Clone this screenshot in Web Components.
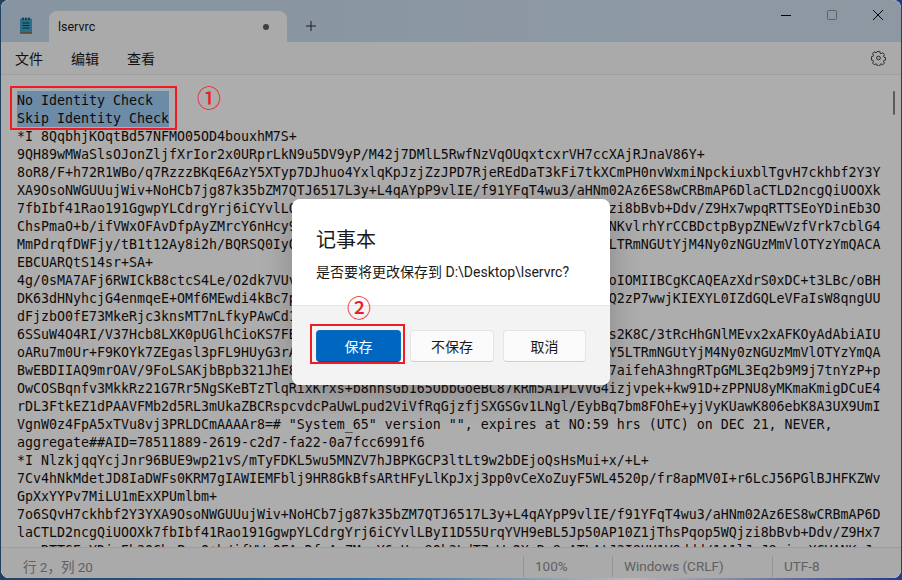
<!DOCTYPE html>
<html lang="zh">
<head>
<meta charset="utf-8">
<title>lservrc - 记事本</title>
<style>
  html, body { margin: 0; height: 100%; }
  body {
    width: 902px; height: 580px; overflow: hidden;
    background: linear-gradient(90deg, #23405f 0%, #2a6fa8 40%, #b9b9b9 70%, #24398c 100%);
    font-family: "Roboto", "Noto Sans CJK SC", sans-serif;
  }
</style>
</head>
<body>
<notepad-window>
  <notepad-titlebar slot="top" name="lservrc"></notepad-titlebar>
  <notepad-menubar slot="top">
    <span>文件</span><span>编辑</span><span>查看</span>
  </notepad-menubar>
  <notepad-editor></notepad-editor>
  <notepad-statusbar slot="bottom"></notepad-statusbar>
  <notepad-dialog slot="overlay" heading="记事本">
    是否要将更改保存到 D:\Desktop\lservrc?
    <dialog-button slot="actions" primary>保存</dialog-button>
    <dialog-button slot="actions">不保存</dialog-button>
    <dialog-button slot="actions">取消</dialog-button>
  </notepad-dialog>
  <red-mark slot="overlay" style="left:9px;top:86px;width:167px;height:44px"></red-mark>
  <red-mark slot="overlay" style="left:309px;top:324px;width:95px;height:40px"></red-mark>
  <red-number slot="overlay" style="left:196px;top:81px">①</red-number>
  <red-number slot="overlay" style="left:346px;top:291px">②</red-number>
</notepad-window>

<script>
// Window shell: everything under the overlay gets dimmed by the scrim
class NotepadWindow extends HTMLElement {
    constructor() {
        super();
        this.attachShadow({ mode: 'open' });
        this.shadowRoot.innerHTML = `
            <style>
                :host {
                    display: flex;
                    flex-direction: column;
                    position: relative;
                    width: 900px;
                    height: 578px;
                    margin-left: 1px;
                    border-radius: 8px;
                    overflow: hidden;
                    background: #fff;
                    color: #1a1a1a;
                }
                .main { flex: 1; min-height: 0; display: flex; }
                .scrim {
                    position: absolute;
                    inset: 0;
                    background: rgba(0, 0, 0, 0.32);
                }
            </style>
            <slot name="top"></slot>
            <div class="main"><slot></slot></div>
            <slot name="bottom"></slot>
            <div class="scrim"></div>
            <slot name="overlay"></slot>
        `;
    }
}

class NotepadTitlebar extends HTMLElement {
    constructor() {
        super();
        this.attachShadow({ mode: 'open' });
    }

    connectedCallback() {
        const name = this.getAttribute('name') || '';
        this.shadowRoot.innerHTML = `
            <style>
                :host {
                    display: flex;
                    align-items: flex-end;
                    height: 42px;
                    flex: none;
                    padding-left: 48px;
                    background: linear-gradient(90deg, #c6dcee, #cfe0f0 60%, #d2e1ef);
                    position: relative;
                }
                .logo { position: absolute; left: 17px; top: 17px; }
                .tab {
                    box-sizing: border-box;
                    width: 238px;
                    height: 31px;
                    border-radius: 8px 8px 0 0;
                    background: #fbfbfb;
                    display: flex;
                    align-items: center;
                    padding: 0 18px 0 9px;
                    font-size: 12.5px;
                }
                .tab span { flex: 1; }
                .dot { width: 6px; height: 6px; border-radius: 50%; background: #5c5c5c; }
                .plus { margin: 0 0 11px 19px; display: block; }
                .controls {
                    position: absolute;
                    right: 0;
                    top: 0;
                    display: flex;
                }
                .controls svg { display: block; width: 46px; height: 30px; }
            </style>
            <svg class="logo" width="16" height="17" viewBox="0 0 16 17">
                <rect x="2" y="1.500" width="12" height="14.500" rx="1" fill="#3fa6cb"/>
                <path d="M2 16h12" stroke="#9a5f2e" stroke-width="1.400"/>
                <path d="M4.500 6h7M4.500 8.500h7M4.500 11h7" stroke="#123f56" stroke-width="1.100"/>
                <path d="M5 .5v2.500M8 .5v2.500M11 .5v2.500" stroke="#123f56" stroke-width="1.400"/>
            </svg>
            <div class="tab"><span>${name}</span><i class="dot"></i></div>
            <svg class="plus" width="10" height="10" viewBox="0 0 10 10">
                <path d="M5 0v10M0 5h10" stroke="#2b2b2b" stroke-width="1"/>
            </svg>
            <div class="controls">
                <svg viewBox="0 0 46 30"><path d="M18 15.500h10" stroke="#000" stroke-width="1"/></svg>
                <svg viewBox="0 0 46 30"><rect x="18.500" y="10.500" width="9" height="9" rx="1" fill="none" stroke="#8a8f96" stroke-width="1"/></svg>
                <svg viewBox="0 0 46 30"><path d="M18 10l10 10M28 10l-10 10" stroke="#000" stroke-width="1"/></svg>
            </div>
        `;
    }
}

class NotepadMenubar extends HTMLElement {
    constructor() {
        super();
        this.attachShadow({ mode: 'open' });
        this.shadowRoot.innerHTML = `
            <style>
                :host {
                    display: flex;
                    align-items: center;
                    flex: none;
                    gap: 28px;
                    box-sizing: border-box;
                    height: 33px;
                    padding: 0 14px 1px;
                    background: #fbfbfb;
                    border-bottom: 1px solid #ececec;
                    font-size: 14px;
                    position: relative;
                }
                svg { position: absolute; right: 15px; top: 8px; }
            </style>
            <slot></slot>
            <svg width="15" height="16" viewBox="0 0 16 16" fill="none" stroke="#333" stroke-width="1">
                <path d="M6.700 1h2.600l.5 2 .9.4 1.800-1 1.800 1.900-1 1.800.4.9 1.800.6v2.600l-1.800.5-.4.9 1 1.800-1.800 1.800-1.800-1-.9.4-.5 2H6.700l-.5-2-.9-.4-1.800 1-1.800-1.800 1-1.800-.4-.9-1.800-.5V6.600l1.800-.6.4-.9-1-1.800 1.800-1.900 1.800 1 .9-.4z"/>
                <circle cx="8" cy="8" r="2"/>
            </svg>
        `;
    }
}

const LINE_WIDTH = 108;
const HIDDEN = 'Qk3LdT7vWm2XoRs8uEiGa1ZpYhJ4nVbC6fMtK9wS5eHxU0qNrOyPzA'.repeat(2);

// 'left|right' = the part in the middle sits behind the dialog
const EDITOR_LINES = [
    'No Identity Check',
    'Skip Identity Check',
    '*I 8QqbhjKOqtBd57NFMO05OD4bouxhM7S+',
    '9QH89wMWaSlsOJonZljfXrIor2x0URprLkN9u5DV9yP/M42j7DMlL5RwfNzVqOUqxtcxrVH7ccXAjRJnaV86Y+',
    '8oR8/F+h72R1WBo/q7RzzzBKqE6AzY5XTyp7DJhuo4YxlqKpJzjZzJPD7RjeREdDaT3kFi7tkXCmPH0nvWxmiNpckiuxblTgvH7ckhbf2Y3Y',
    'XA9OsoNWGUUujWiv+NoHCb7jg87k35bZM7QTJ6517L3y+L4qAYpP9vlIE/f91YFqT4wu3/aHNm02Az6ES8wCRBmAP6DlaCTLD2ncgQiUOOXk',
    '7fbIbf41Rao191GgwpYLCdrgYrj6iCYvlL|zi8bBvb+Ddv/Z9Hx7wpqRTTSEoYDinEb3O',
    'ChsPmaO+b/ifVWxOFAvDfpAyZMrcY6nHcy9|NKvlrhYrCCBDctpBypZNEwVzfVrk7cblG4',
    'MmPdrqfDWFjy/tB1t12Ay8i2h/BQRSQ0IyQ|LTRmNGUtYjM4Ny0zNGUzMmVlOTYzYmQACA',
    'EBCUARQtS14sr+SA+',
    '4g/0sMA7AFj6RWICkB8ctcS4Le/O2dk7VUv|oIOMIIBCgKCAQEAzXdrS0xDC+t3LBc/oBH',
    'DK63dHNyhcjG4enmqeE+OMf6MEwdi4kBc7p|Q2zP7wwjKIEXYL0IZdGQLeVFaIsW8qngUU',
    'dFjzbO0fE73MkeRjc3knsMT7nLfkyPAwCd1',
    '6SSuW4O4RI/V37Hcb8LXK0pUGlhCioKS7FB|s2K8C/3tRcHhGNlMEvx2xAFKOyAdAbiAIU',
    'oARu7m0Ur+F9KOYk7ZEgasl3pFL9HUyG3rA|Y5LTRmNGUtYjM4Ny0zNGUzMmVlOTYzYmQA',
    'BwEBDIIAQ9mrOAV/9FoLSAKjbBpb321JhE8|7aifehA3hngRTpGML3Eq2b9M9j7tnYzP+p',
    'OwCOSBqnfv3MkkRz21G7Rr5NgSKeBTzTlqRixKrxs+b8nnsGb165ObbGoeBC87kRm5AIPLVVG4izjvpek+kw91D+zPPNU8yMKmaKmigDCuE4',
    'rDL3FtkEZ1dPAAVFMb2d5RL3mUkaZBCRspcvdcPaUwLpud2ViVfRqGjzfjSXGSGv1LNgl/EybBq7bm8FOhE+yjVyKUawK806ebK8A3UX9UmI',
    'VgnW0z4FpA5xTVu8vj3PRLDCmAAAAr8=# "System_65" version "", expires at NO:59 hrs (UTC) on DEC 21, NEVER,',
    'aggregate##AID=78511889-2619-c2d7-fa22-0a7fcc6991f6',
    '*I NlzkjqqYcjJnr96BUE9wp21vS/mTyFDKL5wu5MNZV7hJBPKGCP3ltLt9w2bDEjoQsHsMui+x/+L+',
    '7Cv4hNkMdetJD8IaDWFs0KRM7gIAWIEMFblj9HR8GkBfsARtHFyLlKpJxj3pp0vCeXoZuyF5WL4520p/fr8apMV0I+r6LcJ56PGlBJHFKZWv',
    'GpXxYYPv7MiLU1mExXPUmlbm+',
    '7o6SQvH7ckhbf2Y3YXA9OsoNWGUUujWiv+NoHCb7jg87k35bZM7QTJ6517L3y+L4qAYpP9vlIE/f91YFqT4wu3/aHNm02Az6ES8wCRBmAP6D',
    'laCTLD2ncgQiUOOXk7fbIbf41Rao191GgwpYLCdrgYrj6iCYvlLByI1D55UrqYVH9eBL5Jp50AP10Z1jThsPqop5WQjzi8bBvb+Ddv/Z9Hx7',
    'wpqRTTSEoYDinEb3OChsPmaO+b/ifVWxOFAvDfpAyZMrcY6nHcy9Qk3LdT7vWm2XoRs8uATLAtJ3I8UH1V9ddd/1A1lJqJ8ojqgXCVANKcJv'
];

function fillLine(line) {
    const parts = line.split('|');
    if (parts.length < 2) return line;
    return parts[0] + HIDDEN.slice(0, LINE_WIDTH - parts[0].length - parts[1].length) + parts[1];
}

class NotepadEditor extends HTMLElement {
    constructor() {
        super();
        this.attachShadow({ mode: 'open' });
    }

    connectedCallback() {
        const rows = EDITOR_LINES.map((line, i) => {
            const safe = fillLine(line).replace(/&/g, '&amp;').replace(/</g, '&lt;');
            return `<div class="row${i < 2 ? ' sel' : ''}"><span>${safe}</span></div>`;
        }).join('');
        this.shadowRoot.innerHTML = `
            <style>
                :host {
                    display: block;
                    flex: 1;
                    min-width: 0;
                    overflow: hidden;
                    position: relative;
                    background: #fff;
                    font: 13.29px/20px "DejaVu Sans Mono", monospace;
                    color: #111;
                    padding: 16px 0 0 16px;
                }
                .row { height: 18px; white-space: pre; }
                .sel span { display: block; width: 152px; height: 18px; background: #9fcdf7; }
                .thumb {
                    position: absolute;
                    right: 6px;
                    top: 16px;
                    width: 2px;
                    height: 24px;
                    border-radius: 1px;
                    background: #858585;
                }
            </style>
            ${rows}
            <div class="thumb"></div>
        `;
    }
}

class NotepadStatusbar extends HTMLElement {
    constructor() {
        super();
        this.attachShadow({ mode: 'open' });
        this.shadowRoot.innerHTML = `
            <style>
                :host {
                    display: grid;
                    grid-template-columns: 522px 89px 160px 1fr;
                    flex: none;
                    box-sizing: border-box;
                    height: 31px;
                    background: #fbfbfb;
                    border-top: 1px solid #e8e8e8;
                    font-size: 13.500px;
                    color: #8e8e8e;
                }
                div { display: flex; align-items: center; padding: 0 0 1px 11px; margin: 8px 0 6px; border-left: 1px solid #dcdcdc; }
                div:first-of-type { padding-left: 22px; border-left: 0; }
            </style>
            <div>行 2，列 20</div>
            <div>100%</div>
            <div>Windows (CRLF)</div>
            <div>UTF-8</div>
        `;
    }
}

class NotepadDialog extends HTMLElement {
    constructor() {
        super();
        this.attachShadow({ mode: 'open' });
    }

    connectedCallback() {
        const heading = this.getAttribute('heading') || '';
        this.shadowRoot.innerHTML = `
            <style>
                :host {
                    display: flex;
                    flex-direction: column;
                    position: absolute;
                    left: 291px;
                    top: 199px;
                    width: 318px;
                    height: 186px;
                    border-radius: 8px;
                    overflow: hidden;
                    background: #fff;
                    color: #1a1a1a;
                    box-shadow: 0 8px 32px rgba(0, 0, 0, 0.22);
                }
                .body { flex: 1; padding: 26px 24px 0; }
                h2 { margin: 0 0 7px; font-size: 20px; line-height: 30px; font-weight: 400; }
                p { margin: 0; font-size: 14px; line-height: 20px; }
                .actions {
                    display: grid;
                    grid-template-columns: 85px 84px 83px;
                    gap: 9px;
                    justify-content: start;
                    box-sizing: border-box;
                    height: 80px;
                    padding: 24px 24px 0;
                    background: #f3f3f3;
                    border-top: 1px solid #e5e5e5;
                }
            </style>
            <div class="body">
                <h2>${heading}</h2>
                <p><slot></slot></p>
            </div>
            <div class="actions"><slot name="actions"></slot></div>
        `;
    }
}

class DialogButton extends HTMLElement {
    constructor() {
        super();
        this.attachShadow({ mode: 'open' });
        this.shadowRoot.innerHTML = `
            <style>
                :host {
                    display: flex;
                    align-items: center;
                    justify-content: center;
                    height: 32px;
                    box-sizing: border-box;
                    border-radius: 4px;
                    font-size: 14px;
                    background: #fbfbfb;
                    border: 1px solid #e5e5e5;
                    border-bottom-color: #cfcfcf;
                    color: #1a1a1a;
                }
                :host([primary]) {
                    background: #0067c0;
                    border-color: #0f6cbd;
                    border-bottom-color: #0a4f8c;
                    color: #fff;
                }
            </style>
            <slot></slot>
        `;
    }
}

// Red markup added on top of the screenshot
class RedMark extends HTMLElement {
    constructor() {
        super();
        this.attachShadow({ mode: 'open' });
        this.shadowRoot.innerHTML = `
            <style>
                :host {
                    display: block;
                    position: absolute;
                    box-sizing: border-box;
                    border: 2px solid #ee1c25;
                }
            </style>
        `;
    }
}

class RedNumber extends HTMLElement {
    constructor() {
        super();
        this.attachShadow({ mode: 'open' });
        this.shadowRoot.innerHTML = `
            <style>
                :host {
                    display: block;
                    position: absolute;
                    font: 500 24px/32px "Noto Sans CJK SC", sans-serif;
                    color: #ee1c25;
                }
            </style>
            <slot></slot>
        `;
    }
}

customElements.define('notepad-window', NotepadWindow);
customElements.define('notepad-titlebar', NotepadTitlebar);
customElements.define('notepad-menubar', NotepadMenubar);
customElements.define('notepad-editor', NotepadEditor);
customElements.define('notepad-statusbar', NotepadStatusbar);
customElements.define('notepad-dialog', NotepadDialog);
customElements.define('dialog-button', DialogButton);
customElements.define('red-mark', RedMark);
customElements.define('red-number', RedNumber);
</script>
</body>
</html>
